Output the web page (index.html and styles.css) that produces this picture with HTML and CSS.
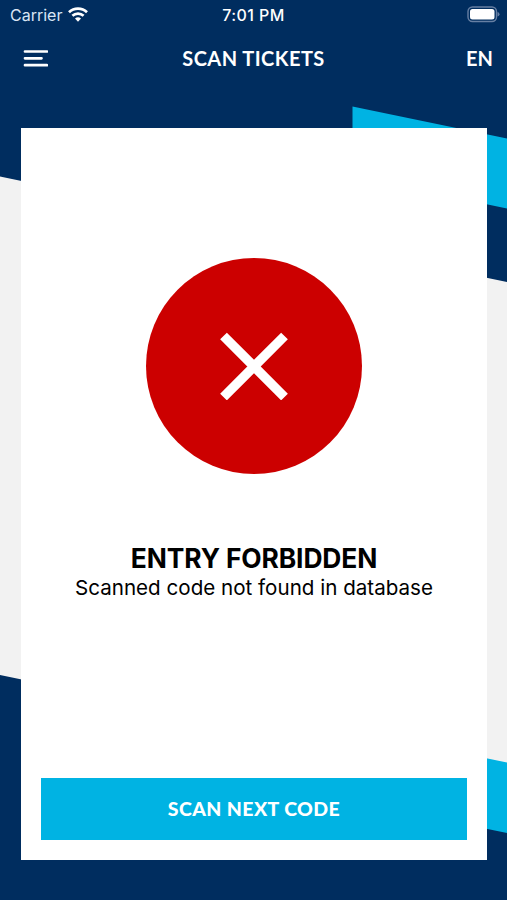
FILE: index.html
```html
<!DOCTYPE html>
<html lang="en">
<head>
  <meta charset="UTF-8">
  <meta name="viewport" content="width=device-width, initial-scale=1.0">
  <title>Scan tickets</title>
  <link rel="stylesheet" href="styles.css">
</head>
<body>
  <svg class="background" viewBox="0 0 507 900" preserveAspectRatio="none" aria-hidden="true">
    <path fill="#f2f2f2" d="M0 176.500L507 282V780L0 675z"/>
    <path fill="#00b3e3" d="M352.500 106.500L507 138.500V208.500L352.500 176.500z"/>
    <path fill="#00b3e3" d="M400 740.500L507 762.500V833L400 811z"/>
  </svg>

  <div class="status-bar">
    <div class="carrier">
      <span>Carrier</span>
      <svg width="20" height="15" viewBox="0 0 20 15" fill="none" stroke="#fff" stroke-width="2.700">
        <path d="M1 5.300C6 .500 14 .500 19 5.300"/>
        <path d="M4.400 8.800C7.600 5.800 12.400 5.800 15.600 8.800"/>
        <path fill="#fff" stroke="none" d="M7 11.600Q10 9.100 13 11.600L10 14.800z"/>
      </svg>
    </div>
    <span class="time">7:01 PM</span>
    <svg class="battery" width="34" height="17" viewBox="0 0 34 17">
      <rect x="2" y="1" width="28.500" height="14.500" rx="4.500" fill="none" stroke="#667fa3" stroke-width="1.400"/>
      <rect x="4" y="3" width="24.500" height="10.500" rx="2.500" fill="#fff"/>
      <path d="M31.500 6Q33.500 6.300 33.500 8.300T31.500 10.600z" fill="#667fa3"/>
    </svg>
  </div>

  <header class="header">
    <button class="menu-btn" aria-label="Menu">
      <svg width="25" height="18" viewBox="0 0 25 18" stroke="#fff" stroke-width="2.700" stroke-linecap="round">
        <path d="M2 2.500H24M2 9.300H18.500M2 16.200H24"/>
      </svg>
    </button>
    <h1>SCAN TICKETS</h1>
    <button class="lang-btn">EN</button>
  </header>

  <main class="card">
    <div class="result-icon">
      <svg width="68" height="68" viewBox="0 0 68 68" stroke="#fff" stroke-width="9.500">
        <path d="M3.500 4L64.500 65M64.500 4L3.500 65"/>
      </svg>
    </div>
    <h2>ENTRY FORBIDDEN</h2>
    <p>Scanned code not found in database</p>
    <button class="scan-btn">SCAN NEXT CODE</button>
  </main>
</body>
</html>
```
FILE: styles.css
```css
* { box-sizing: border-box; }
body {
  font-family: Inter, Roboto, sans-serif;
  margin: 0;
  height: 100vh;
  overflow: hidden;
  background-color: #002d5f;
  color: #fff;
}
h1, h2, p { margin: 0; white-space: nowrap; }
svg { display: block; }
button {
  border: none;
  padding: 0;
  background: none;
  color: #fff;
}
.background {
  position: absolute;
  z-index: -1;
  width: 100%;
  height: 100%;
}
.status-bar, .header {
  display: grid;
  grid-template-columns: 1fr auto 1fr;
  align-items: center;
}
.status-bar {
  height: 29px;
  padding: 0 7px 0 10px;
}
.carrier {
  display: flex;
  gap: 6px;
  align-items: center;
  font-size: 16px;
  color: #d9e5f5;
}
.time {
  margin-left: -3px;
  font-size: 16px;
  font-weight: 500;
  letter-spacing: 0.4px;
}
.battery { justify-self: end; }
.header {
  height: 57px;
  padding: 0 14px 0 23px;
}
.header h1, .lang-btn {
  font-family: Lato, sans-serif;
  font-size: 20px;
  font-weight: 700;
}
.header h1 {
  margin-left: -9px;
  letter-spacing: 0.45px;
}
.menu-btn { justify-self: start; }
.lang-btn { justify-self: end; }
.card {
  display: flex;
  flex-direction: column;
  align-items: center;
  height: 732px;
  margin: 41.5px 20px 0 21px;
  padding: 130px 20px 20px;
  background: #fff;
  color: #000;
}
.result-icon {
  display: flex;
  align-items: center;
  justify-content: center;
  flex: none;
  width: 216px;
  height: 216px;
  border-radius: 50%;
  background: #c00;
}
.card h2 {
  margin-top: 68px;
  font-size: 26.4px;
  font-weight: 700;
  line-height: 32px;
  letter-spacing: -0.12px;
}
.card p {
  font-size: 20.6px;
  line-height: 28px;
}
.scan-btn {
  width: 100%;
  height: 62px;
  margin-top: auto;
  background: #00b3e3;
  font-family: Lato, sans-serif;
  font-size: 19.5px;
  font-weight: 900;
  letter-spacing: 0.4px;
}
```
